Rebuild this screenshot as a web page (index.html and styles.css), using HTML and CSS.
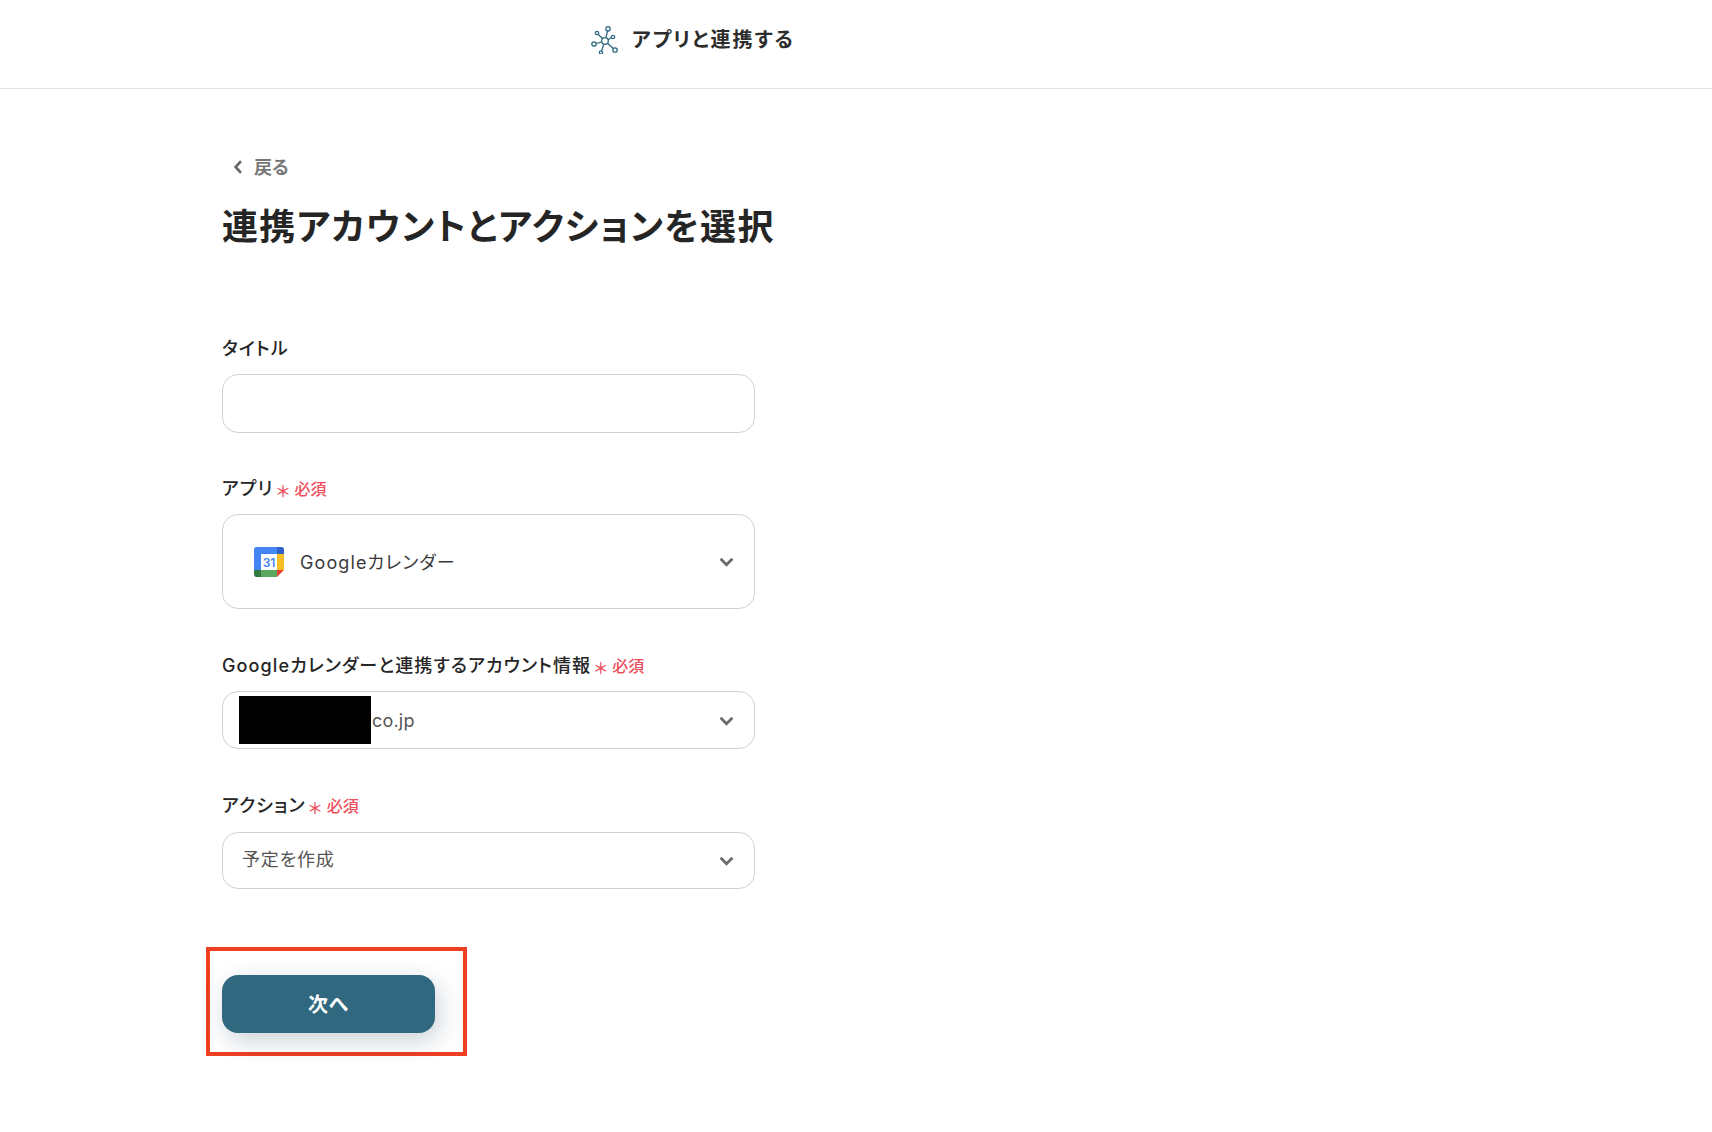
FILE: index.html
```
<!DOCTYPE html>
<html lang="ja">
<head>
<meta charset="utf-8">
<title>連携アカウントとアクションを選択</title>
<link rel="stylesheet" href="styles.css">
</head>
<body>
<header class="top-bar">
  <svg class="top-icon" viewBox="0 0 28 28" fill="none" stroke="#2f6980" stroke-width="1.300">
    <circle cx="14" cy="15" r="3.300"/>
    <circle cx="17" cy="2.800" r="2.200"/>
    <circle cx="6" cy="7" r="1.700"/>
    <circle cx="22" cy="11" r="1.700"/>
    <circle cx="3" cy="18" r="2.200"/>
    <circle cx="24" cy="24" r="2.200"/>
    <circle cx="10" cy="26.500" r="1.600"/>
    <path d="M14.800 11.800 16.600 5M11.600 12.700 7.200 8.200M17 14 20.400 11.500M10.800 15.800 5.100 17.500M16.500 17.200 22.300 22.500M12.800 18.100 10.600 24.900"/>
  </svg>
  <span class="top-title">アプリと連携する</span>
</header>
<main class="page">
  <a class="back" href="#">
    <svg class="back-icon" viewBox="0 0 10 14" fill="none" stroke="#666" stroke-width="2.600"><path d="M8 1.200 2.600 7 8 12.800"/></svg>
    <span>戻る</span>
  </a>
  <h1 class="heading">連携アカウントとアクションを選択</h1>
  <form class="form">
    <div class="field field-title">
      <div class="label">タイトル</div>
      <div class="control control-title"></div>
    </div>
    <div class="field field-app">
      <div class="label">アプリ<span class="req"><span class="star">＊</span>必須</span></div>
      <div class="control control-tall">
        <svg class="gcal" viewBox="0 0 32 32">
          <path fill="#4285f4" d="M24 1H3.500A2.500 2.500 0 0 0 1 3.500V24h7V8h16z"/>
          <path fill="#2f62c8" d="M24 1v7h7V3.500A2.500 2.500 0 0 0 28.500 1z"/>
          <path fill="#f6bf26" d="M24 8h7v16h-7z"/>
          <path fill="#5aa860" d="M8 24h16v7H8z"/>
          <path fill="#33793f" d="M1 24v4.500A2.500 2.500 0 0 0 3.500 31H8v-7z"/>
          <path fill="#e94235" d="M24 24h7l-7 7z"/>
          <path fill="#fff" d="M8 8h16v16H8z"/>
          <text class="gcal-num" x="16" y="20.500">31</text>
        </svg>
        <span class="app-name">Googleカレンダー</span>
        <svg class="chev" viewBox="0 0 14 9" fill="none" stroke="#6b6b6b" stroke-width="2.600"><path d="M1.500 1.500 7 7l5.500-5.500"/></svg>
      </div>
    </div>
    <div class="field field-account">
      <div class="label">Googleカレンダーと連携するアカウント情報<span class="req"><span class="star">＊</span>必須</span></div>
      <div class="control control-account">
        <span class="redact"></span><span class="value value-latin">co.jp</span>
        <svg class="chev chev-low" viewBox="0 0 14 9" fill="none" stroke="#6b6b6b" stroke-width="2.600"><path d="M1.500 1.500 7 7l5.500-5.500"/></svg>
      </div>
    </div>
    <div class="field field-action">
      <div class="label">アクション<span class="req"><span class="star">＊</span>必須</span></div>
      <div class="control control-action">
        <span class="value value-action">予定を作成</span>
        <svg class="chev" viewBox="0 0 14 9" fill="none" stroke="#6b6b6b" stroke-width="2.600"><path d="M1.500 1.500 7 7l5.500-5.500"/></svg>
      </div>
    </div>
    <div class="next-frame">
      <button class="next" type="button">次へ</button>
    </div>
  </form>
</main>
</body>
</html>
```
FILE: styles.css
```
* { box-sizing: border-box; }
html, body { margin: 0; padding: 0; background: #fff; }
body {
  height: 1132px;
  overflow: hidden;
  font-family: Inter, "Noto Sans CJK JP", sans-serif;
  font-feature-settings: "palt";
  color: #2a2a2a;
}
.top-bar {
  height: 89px;
  border-bottom: 1px solid #e3e3e3;
  display: flex;
  align-items: center;
  padding-left: 591px;
  padding-bottom: 8px;
}
.top-icon { width: 28px; height: 28px; margin-right: 13px; }
.top-title { font-size: 20px; font-weight: 700; letter-spacing: 1.900px; color: #2d2d2d; margin-top: -3px; }
.page { padding: 67px 0 0 222px; }
.back {
  display: flex;
  align-items: center;
  height: 22px;
  color: #777;
  font-size: 18px;
  font-weight: 700;
  text-decoration: none;
  padding-left: 11px;
  margin-top: -1px;
}
.back-icon { width: 10px; height: 14px; margin-right: 11px; margin-top: 2px; }
.heading {
  margin: 24px 0 0;
  font-size: 36px;
  letter-spacing: 1.300px;
  line-height: 52px;
  font-weight: 700;
  color: #252525;
}
.form { margin-top: 82px; display: flex; flex-direction: column; }
.field { width: 533px; margin-top: 44px; }
.field-title { margin-top: 0; }
.field-app { margin-top: 42px; }
.field-account { margin-top: 43px; }
.field-action { margin-top: 43px; }
.field-action .control { margin-top: 16px; }
.label {
  display: flex;
  align-items: center;
  height: 24px;
  font-size: 18px;
  font-weight: 500;
  letter-spacing: 1.100px;
  color: #252525;
}
.req {
  display: inline-flex;
  align-items: center;
  font-size: 16px;
  font-weight: 500;
  letter-spacing: 0;
  color: #ee4f5c;
  padding-top: 2px;
  margin-left: 3px;
}
.star { position: relative; top: 2px; margin-right: 5px; }
.control {
  margin-top: 15px;
  height: 58px;
  border: 1px solid #cfd2d6;
  border-radius: 16px;
  display: flex;
  align-items: center;
  padding: 0 19px;
  background: #fff;
}
.control-title { height: 59px; }
.control-tall { height: 95px; padding-left: 30px; }
.control-account { padding-left: 16px; }
.control-action { height: 57px; }
.gcal { width: 32px; height: 32px; flex: none; }
.gcal-num { font: 600 12px Inter, sans-serif; fill: #4285f4; text-anchor: middle; }
.app-name { margin-left: 15px; margin-top: -2px; font-size: 18px; color: #3a3a3a; letter-spacing: 1.100px; }
.value { font-size: 18px; color: #555; letter-spacing: .2px; }
.value-action { letter-spacing: .8px; margin-top: -5px; }
.redact { width: 132px; height: 48px; background: #000; flex: none; margin-right: 1px; }
.chev { width: 15px; height: 10px; margin-left: auto; margin-right: 1px; flex: none; }
.chev-low { margin-top: 2px; }
.next-frame {
  align-self: flex-start;
  margin-top: 58px;
  margin-left: -16px;
  border: 4px solid #ee3f22;
  padding: 24px 28px 19px 12px;
}
.next {
  display: block;
  width: 213px;
  height: 58px;
  border: 0;
  border-radius: 16px;
  background: #30687f;
  color: #fff;
  font: 700 20px Inter, "Noto Sans CJK JP", sans-serif;
  letter-spacing: .5px;
  padding-bottom: 3px;
  box-shadow: 4px 8px 24px rgba(40, 70, 90, .24);
}
```
